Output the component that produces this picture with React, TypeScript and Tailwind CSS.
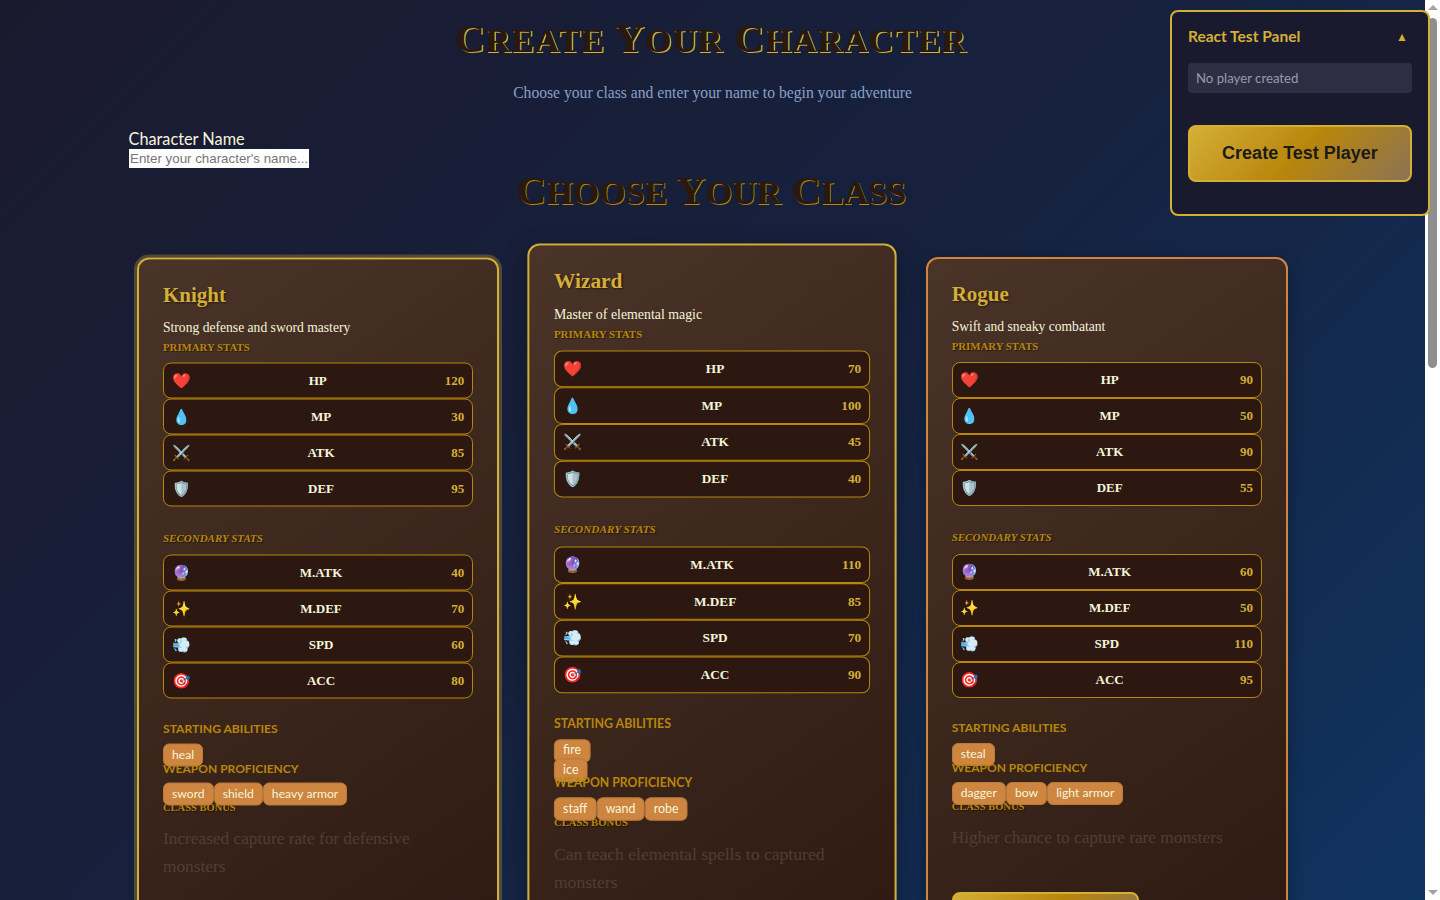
const serif = "font-['Liberation_Serif',serif]";

interface Stat {
  icon: string;
  label: string;
  value: number;
}

interface ClassInfo {
  name: string;
  description: string;
  primary: number[];
  secondary: number[];
  abilities: string[][];
  weapons: string[];
  bonus: string;
  frame: string;
}

const primaryMeta = [
  { icon: '❤️', label: 'HP' },
  { icon: '💧', label: 'MP' },
  { icon: '⚔️', label: 'ATK' },
  { icon: '🛡️', label: 'DEF' },
];

const secondaryMeta = [
  { icon: '🔮', label: 'M.ATK' },
  { icon: '✨', label: 'M.DEF' },
  { icon: '💨', label: 'SPD' },
  { icon: '🎯', label: 'ACC' },
];

const classes: ClassInfo[] = [
  {
    name: 'Knight',
    description: 'Strong defense and sword mastery',
    primary: [120, 30, 85, 95],
    secondary: [40, 70, 60, 80],
    abilities: [['heal']],
    weapons: ['sword', 'shield', 'heavy armor'],
    bonus: 'Increased capture rate for defensive monsters',
    frame: 'border-[#d4af37] translate-y-[0.5px] shadow-[0_0_0_3px_rgba(212,175,55,0.3)]',
  },
  {
    name: 'Wizard',
    description: 'Master of elemental magic',
    primary: [70, 100, 45, 40],
    secondary: [110, 85, 70, 90],
    abilities: [['fire'], ['ice']],
    weapons: ['staff', 'wand', 'robe'],
    bonus: 'Can teach elemental spells to captured monsters',
    frame: 'border-[#d4af37] -translate-y-[6px] scale-[1.02] shadow-[0_8px_25px_rgba(0,0,0,0.3)]',
  },
  {
    name: 'Rogue',
    description: 'Swift and sneaky combatant',
    primary: [90, 50, 90, 55],
    secondary: [60, 50, 110, 95],
    abilities: [['steal']],
    weapons: ['dagger', 'bow', 'light armor'],
    bonus: 'Higher chance to capture rare monsters',
    frame: 'border-[#cd853f] shadow-[0_4px_15px_rgba(0,0,0,0.3)]',
  },
];

// big first letter, the rest as tall small capitals
const TitleWords = ({ text, rest }: { text: string; rest: string }) => (
  <>
    {text.split(' ').map((word, i) => (
      <span key={word}>
        {i > 0 && ' '}
        {word[0]}
        <span className={`uppercase ${rest}`}>{word.slice(1)}</span>
      </span>
    ))}
  </>
);

const StatRow = ({ icon, label, value }: Stat) => (
  <div className={`flex h-9 items-center justify-between rounded-lg border border-[#b8860b] bg-[#2c1810] px-2 ${serif}`}>
    <span className="font-['Noto_Color_Emoji','Noto_Sans',sans-serif] text-[15px] leading-none">{icon}</span>
    <span className="text-[13px] font-bold text-[#f5f5dc]">{label}</span>
    <span className="text-[13px] font-bold text-[#d4af37]">{value}</span>
  </div>
);

const Tag = ({ text }: { text: string }) => (
  <span className="flex h-[23px] shrink-0 items-center rounded-md border border-[#b9793c] bg-[#cd853f] px-2 font-['Lato',sans-serif] text-[12.2px] text-[#f5f5dc]">
    {text}
  </span>
);

const ClassCard = ({ info }: { info: ClassInfo }) => (
  <div className={`flex flex-col rounded-xl border-2 bg-[linear-gradient(145deg,#4a3428,#2c1810)] p-6 ${info.frame}`}>
    <h3 className={`text-[21px] leading-[22px] font-bold text-[#d4af37] [text-shadow:1px_1px_2px_rgba(0,0,0,0.5)] ${serif}`}>
      {info.name}
    </h3>
    <p className={`mt-[11px] text-[13.6px] leading-[22px] text-[#f5f5dc] ${serif}`}>{info.description}</p>
    <h4 className={`text-[10.8px] leading-[16px] font-bold text-[#b8860b] uppercase [text-shadow:1px_1px_1px_rgba(0,0,0,0.5)] ${serif}`}>
      Primary Stats
    </h4>
    <div className="mt-[8px] flex flex-col">
      {info.primary.map((value, i) => (
        <StatRow key={i} {...primaryMeta[i]} value={value} />
      ))}
    </div>
    <h4 className={`mt-[23px] text-[11px] leading-[16px] font-bold italic text-[#b8860b] uppercase [text-shadow:1px_1px_1px_rgba(0,0,0,0.5)] ${serif}`}>
      Secondary Stats
    </h4>
    <div className="mt-[9px] flex flex-col">
      {info.secondary.map((value, i) => (
        <StatRow key={i} {...secondaryMeta[i]} value={value} />
      ))}
    </div>
    <h4 className="mt-[22px] font-['Lato',sans-serif] text-[12.1px] leading-[16px] font-bold text-[#b8860b] uppercase">
      Starting Abilities
    </h4>
    <div className="mt-[7px] flex flex-col">
      {info.abilities.map((row, i) => (
        <div key={i} className={`flex ${i > 0 ? 'h-[18px]' : 'h-[19px]'}`}>
          {row.map((a) => (
            <Tag key={a} text={a} />
          ))}
        </div>
      ))}
    </div>
    <h4 className="relative -mt-[2.5px] font-['Lato',sans-serif] text-[12px] leading-[16px] font-bold text-[#b8860b] uppercase">
      Weapon Proficiency
    </h4>
    <div className="relative z-10 mt-[6px] flex h-[19px]">
      {info.weapons.map((w) => (
        <Tag key={w} text={w} />
      ))}
    </div>
    <h4 className={`-mt-[2px] text-[10.5px] leading-[16px] font-bold text-[#b8860b] uppercase [text-shadow:1px_1px_1px_rgba(0,0,0,0.5)] ${serif}`}>
      Class Bonus
    </h4>
    <p className={`mt-[9px] pr-[8px] text-[17.3px] leading-[28px] text-[#563b34] ${serif}`}>{info.bonus}</p>
    <button className="mt-[40px] h-12 w-[187px] rounded-lg border-2 border-[#d4af37] bg-[linear-gradient(135deg,#d4af37,#b8860b,#8b7355)] font-['Liberation_Sans',sans-serif] font-bold text-[#1a1a1a]">
      Select Class
    </button>
  </div>
);

const TestPanel = () => (
  <div className="fixed top-[10px] right-[10px] z-50 h-[206px] w-[260px] rounded-lg border-2 border-[#d4af37] bg-[#1a1a2e] p-4">
    <div className="flex h-[18px] items-center justify-between font-['Lato',sans-serif] text-[15.5px] font-bold text-[#d4af37]">
      <span>React Test Panel</span>
      <span className="mr-[4px] text-[12px]">▲</span>
    </div>
    <div className="mt-[17px] flex h-[30px] items-center rounded bg-[#2d2d44] px-2 pt-[1px] font-['Lato',sans-serif] text-[13.2px] text-[#9a9aa8]">
      No player created
    </div>
    <button className="mt-[32px] h-[57px] w-full rounded-lg border-2 border-[#d4af37] bg-[linear-gradient(135deg,#d4af37,#b8860b,#8b7355)] font-['Liberation_Sans',sans-serif] text-[18px] font-bold text-[#1a1a1a]">
      Create Test Player
    </button>
  </div>
);

// the capture hides native scrollbars, so the page's one is drawn over the right edge
const Scrollbar = () => (
  <div className="fixed top-0 right-0 bottom-0 z-40 flex w-[15px] flex-col items-center justify-between bg-white py-[5px]">
    <div className="h-0 w-0 border-x-[5px] border-b-[5px] border-x-transparent border-b-[#a3a3a3]" />
    <div className="absolute top-[18px] left-[3px] h-[350px] w-[9px] rounded-[5px] bg-[#8f8f8f]" />
    <div className="h-0 w-0 border-x-[5px] border-t-[5px] border-x-transparent border-t-[#a3a3a3]" />
  </div>
);

export default function App() {
  return (
    <div className="min-h-[2218px] bg-[linear-gradient(135deg,#1a1a2e_0%,#16213e_50%,#0f3460_100%)] bg-fixed">
      <Scrollbar />
      <TestPanel />
      <div className="mr-[15px]">
        <div className="mx-auto max-w-[1200px] px-4">
          <h1 className={`h-[64px] pt-[14px] text-center text-[41px] leading-[50px] font-bold tracking-[0.9px] bg-[#d4af37] bg-clip-text text-transparent [text-shadow:-1.5px_-1.5px_0_#2c1810] ${serif}`}>
            <TitleWords text="Create Your Character" rest="text-[34px]" />
          </h1>
          <p className={`mt-[17px] text-center text-[15.65px] leading-[24px] text-[#87a0c9] ${serif}`}>
            Choose your class and enter your name to begin your adventure
          </p>
          <div className="mt-[24px]">
            <label className="block font-['Lato',sans-serif] text-[16.3px] leading-[20px] text-[#f5f5dc]">Character Name</label>
            <input
              placeholder="Enter your character's name..."
              className="ml-[0.5px] block h-[19px] w-[180px] bg-white px-[1px] font-['Liberation_Sans',sans-serif] text-[13.33px] text-black placeholder:text-[#757575]"
            />
          </div>
          <h2 className={`-mt-[2px] h-[50px] text-center text-[41px] leading-[50px] font-bold tracking-[0px] text-transparent bg-[#b8860b] bg-clip-text [text-shadow:-1px_-1px_0_#2c1810] ${serif}`}>
            <TitleWords text="Choose Your Class" rest="text-[34px]" />
          </h2>
          <div className="mx-auto mt-[41px] grid max-w-[1151px] grid-cols-3 gap-8">
            {classes.map((c) => (
              <ClassCard key={c.name} info={c} />
            ))}
          </div>
        </div>
      </div>
    </div>
  );
}
